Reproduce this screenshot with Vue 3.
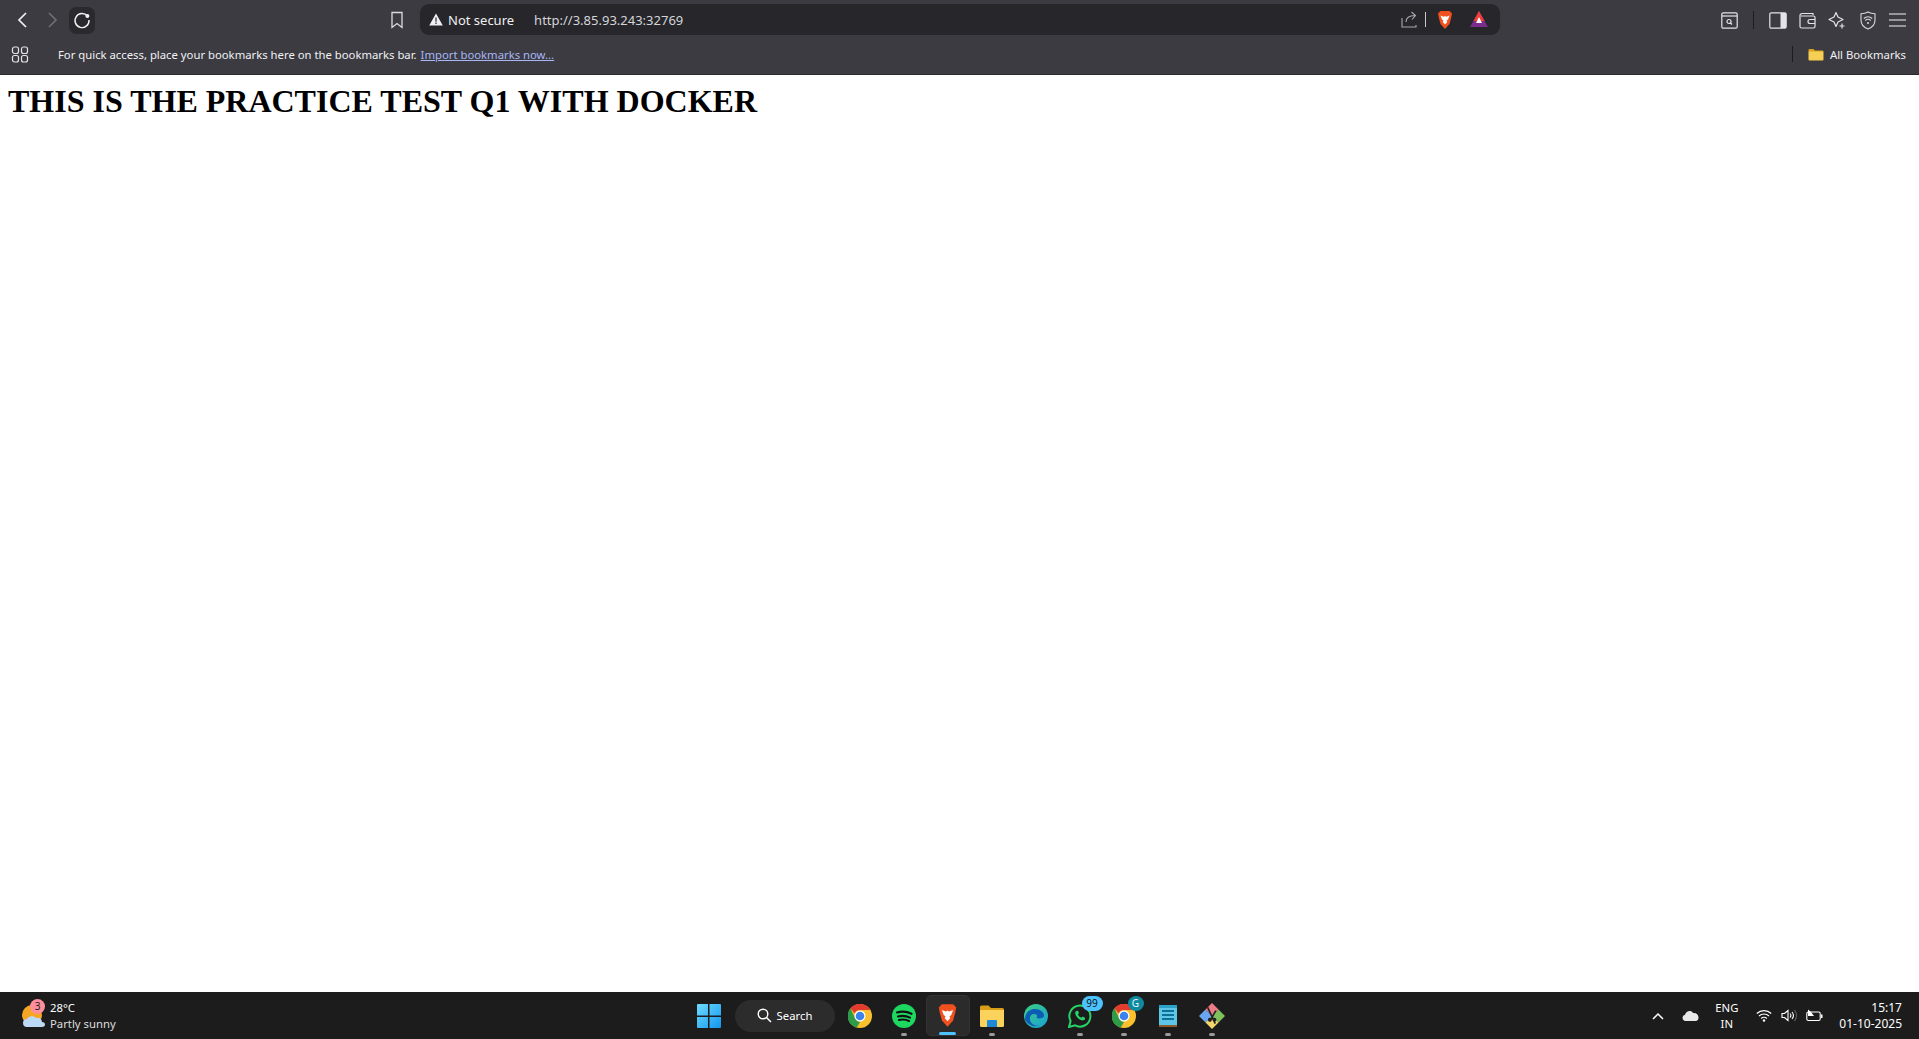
<script setup>
const apps = ['chrome', 'spotify', 'brave', 'folder', 'edge', 'whatsapp', 'chrome2', 'notepad', 'git']
const running = ['spotify', 'folder', 'whatsapp', 'chrome2', 'notepad', 'git']
</script>

<template>
  <div class="page">
    <header class="chrome-ui">
      <div class="toolbar">
        <div class="nav">
          <button class="nav-btn"><svg width="16" height="18" viewBox="0 0 16 18"><path d="M11 2 4 9l7 7" fill="none" stroke="#f0f0f2" stroke-width="1.700"/></svg></button>
          <button class="nav-btn"><svg width="16" height="18" viewBox="0 0 16 18"><path d="M5 2l7 7-7 7" fill="none" stroke="#6f6f75" stroke-width="1.700"/></svg></button>
          <button class="nav-btn reload"><svg width="20" height="20" viewBox="0 0 20 20"><path d="M15.500 6.200A7 7 0 1 0 17 10" fill="none" stroke="#f2f2f4" stroke-width="1.400"/><circle cx="15.400" cy="6" r="2" fill="#f2f2f4"/></svg></button>
        </div>
        <div class="bookmark-star"><svg width="14" height="18" viewBox="0 0 14 18"><path d="M2 1.500h10v15l-5-4-5 4z" fill="none" stroke="#dcdce0" stroke-width="1.300"/></svg></div>
        <div class="omnibox">
          <svg class="warn" width="14" height="13" viewBox="0 0 14 13"><path d="M7 .5 13.800 12.500H.2z" fill="#f0f0f2"/><path d="M6.400 4.500h1.200v4.200H6.400zM6.400 9.600h1.200v1.300H6.400z" fill="#2a2a2e"/></svg>
          <span class="secure">Not secure</span>
          <span class="url">http://3.85.93.243:32769</span>
          <span class="grow"></span>
          <svg class="share" width="16" height="17" viewBox="0 0 16 17"><path d="M1 7v9h14v-2M5 11c0-4 3-6.500 9-6.500M10.500 1 14.500 4.500 11 8.500" fill="none" stroke="#a9a9ae" stroke-width="1.100"/></svg>
          <span class="omni-sep"></span>
          <svg class="lion" width="16" height="20" viewBox="0 0 16 20"><path d="M3.500 1h9l2.500 2.500-.8 4L12.500 14 8 19l-4.500-5-1.700-6.500L1 3.500z" fill="#f0511e"/><path d="M3.500 5.500 6.800 6.700 8 6l1.200.7 3.300-1.200-1.500 4-1.500 1.200.8 1.300L8 14.500 5.700 12l.8-1.300L5 9.500z" fill="#fff"/></svg>
          <svg class="bat" width="18" height="17" viewBox="0 0 18 17"><path d="M9 0 18 16H0z" fill="#7a2d8c"/><path d="M9 0 14.500 10h-11z" fill="#ef3f3a"/><path d="M9 6 12 12H6z" fill="#fff"/></svg>
        </div>
        <div class="tools">
          <svg width="17" height="17" viewBox="0 0 17 17"><rect x=".8" y=".8" width="15.400" height="15.400" rx="1.500" fill="none" stroke="#e4e4e8" stroke-width="1.200"/><path d="M1 4h15" stroke="#e4e4e8" stroke-width="1.200"/><circle cx="8" cy="9.500" r="2" fill="none" stroke="#e4e4e8" stroke-width="1.200"/><path d="m9.500 11 1.500 1.500" stroke="#e4e4e8" stroke-width="1.200"/></svg>
          <span class="tool-sep"></span>
          <svg class="sidebar-ic" width="18" height="17" viewBox="0 0 18 17"><rect x=".8" y=".8" width="16.400" height="15.400" rx="1.500" fill="none" stroke="#e4e4e8" stroke-width="1.200"/><rect x="11.500" y="1" width="5.500" height="15" fill="#e4e4e8"/></svg>
          <svg class="wallet" width="17" height="17" viewBox="0 0 17 17"><path d="M14 3V1.500H3A2 2 0 0 0 1 3.500v11a1.500 1.500 0 0 0 1.500 1.500h12A1.500 1.500 0 0 0 16 14.500v-9a1.500 1.500 0 0 0-1.500-1.500H2" fill="none" stroke="#e4e4e8" stroke-width="1.200"/><path d="M16 7.500h-5a2 2 0 0 0 0 4h5" fill="none" stroke="#e4e4e8" stroke-width="1.200"/></svg>
          <svg class="spark" width="18" height="19" viewBox="0 0 18 19"><path d="M8 1.500 10 6l5 2.500-5 2.500-2 4.500L6 11 1 8.500 6 6z" fill="none" stroke="#e4e4e8" stroke-width="1.200" stroke-linejoin="round"/><path d="M14 12.500v5M11.500 15h5" stroke="#e4e4e8" stroke-width="1.200"/></svg>
          <svg class="shield" width="16" height="19" viewBox="0 0 16 19"><path d="M8 1c2 1.200 4.500 1.700 7 1.700V9c0 4.500-3 7.500-7 9-4-1.500-7-4.500-7-9V2.700C3.500 2.700 6 2.200 8 1z" fill="none" stroke="#d8d8dc" stroke-width="1.100"/><path d="M3.800 7.500a6 6 0 0 1 8.400 0M5.300 9.500a4 4 0 0 1 5.400 0" fill="none" stroke="#d8d8dc" stroke-width="1.100"/><circle cx="8" cy="12" r="1" fill="#d8d8dc"/></svg>
          <svg class="menu" width="17" height="14" viewBox="0 0 17 14"><path d="M0 1h17M0 7h17M0 13h17" stroke="#b5b5ba" stroke-width="1.500"/></svg>
        </div>
      </div>
      <div class="bookmarks">
        <svg class="apps" width="18" height="17" viewBox="0 0 18 17"><g fill="none" stroke="#e4e4e8" stroke-width="1.200"><rect x="1.500" y="1" width="6" height="6.500" rx="2"/><rect x="10.500" y="1" width="6" height="6.500" rx="2"/><rect x="1.500" y="9.500" width="6" height="6.500" rx="2"/><rect x="10.500" y="9.500" width="6" height="6.500" rx="2"/></g></svg>
        <span class="hint">For quick access, place your bookmarks here on the bookmarks bar.</span>
        <a class="import">Import bookmarks now...</a>
        <span class="grow"></span>
        <span class="bm-sep"></span>
        <svg class="folder-ic" width="16" height="13" viewBox="0 0 16 13"><path d="M.5 2A1 1 0 0 1 1.500 1h4l1.500 1.500h7.500a1 1 0 0 1 1 1V4H.5z" fill="#d9a21f"/><rect x=".5" y="3.500" width="15" height="9" rx="1" fill="#f8cf55"/></svg>
        <span class="all">All Bookmarks</span>
      </div>
    </header>

    <main class="content">
      <h1>THIS IS THE PRACTICE TEST Q1 WITH DOCKER</h1>
    </main>

    <footer class="taskbar">
      <div class="weather">
        <div class="weather-ic">
          <svg width="26" height="28" viewBox="0 0 26 28"><circle cx="12" cy="12" r="10" fill="#f5a623"/><path d="M7 24a4 4 0 0 1 0-8c1-3 7-4 9-1 3-1 6 1 6 4 2 0 3 1 3 2.500S24 24 22 24z" fill="#bcd9f5"/></svg>
          <span class="notif">3</span>
        </div>
        <div class="weather-text">
          <span class="temp">28°C</span>
          <span class="sky">Partly sunny</span>
        </div>
      </div>

      <div class="center">
        <div class="cell">
          <svg width="24" height="24" viewBox="0 0 24 24"><defs><linearGradient id="win" x1="0" y1="0" x2="1" y2="1"><stop offset="0" stop-color="#6fdcff"/><stop offset="1" stop-color="#1196f0"/></linearGradient></defs><path d="M0 1a1 1 0 0 1 1-1h10v11.500H0zM12.500 0H23a1 1 0 0 1 1 1v10.500H12.500zM0 13h11v11H1a1 1 0 0 1-1-1zM12.500 13H24v10a1 1 0 0 1-1 1H12.500z" fill="url(#win)"/></svg>
        </div>
        <div class="search">
          <svg width="15" height="15" viewBox="0 0 15 15"><circle cx="6" cy="6" r="4.800" fill="none" stroke="#fff" stroke-width="1.400"/><path d="m9.500 9.500 4.500 4.500" stroke="#fff" stroke-width="1.500"/></svg>
          <span>Search</span>
        </div>
        <div v-for="a in apps" :key="a" class="cell" :class="{ active: a === 'brave' }">
          <svg v-if="a === 'chrome' || a === 'chrome2'" width="24" height="24" viewBox="0 0 24 24"><circle cx="12" cy="12" r="12" fill="#fbc02d"/><path d="M12 0a12 12 0 0 1 10.400 6H12a6 6 0 0 0-5.400 3.400L2.400 4.200A12 12 0 0 1 12 0z" fill="#e33b2e"/><path d="M2.400 4.200 7.500 15a6 6 0 0 0 4.500 3l-3.200 5.600A12 12 0 0 1 2.400 4.200z" fill="#2e9b48"/><circle cx="12" cy="12" r="5.500" fill="#fff"/><circle cx="12" cy="12" r="4.300" fill="#3b82ee"/></svg>
          <svg v-else-if="a === 'spotify'" width="24" height="24" viewBox="0 0 24 24"><circle cx="12" cy="12" r="12" fill="#1ed760"/><path d="M5 8.500c5-1.500 10-1 14.500 1.300M6 12.500c4.500-1.200 8.500-.7 12 1.200M7 16c3.500-1 7-.6 10 1" fill="none" stroke="#111" stroke-width="2.100" stroke-linecap="round"/></svg>
          <svg v-else-if="a === 'brave'" width="21" height="25" viewBox="0 0 16 20"><path d="M3.500 1h9l2.500 2.500-.8 4L12.500 14 8 19l-4.500-5-1.700-6.500L1 3.500z" fill="#f0511e"/><path d="M3.500 5.500 6.800 6.700 8 6l1.200.7 3.300-1.200-1.500 4-1.500 1.200.8 1.300L8 14.500 5.700 12l.8-1.300L5 9.500z" fill="#fff"/></svg>
          <svg v-else-if="a === 'folder'" width="24" height="22" viewBox="0 0 24 22"><path d="M0 2a1.500 1.500 0 0 1 1.500-1.500h7L11 3h11.500A1.500 1.500 0 0 1 24 4.500V7H0z" fill="#d99e16"/><path d="M0 5h24v15.500a1.500 1.500 0 0 1-1.500 1.500h-21A1.500 1.500 0 0 1 0 20.500z" fill="#fbd35c"/><path d="M7 16a1 1 0 0 1 1-1h8a1 1 0 0 1 1 1v6H7z" fill="#1e88d8"/></svg>
          <svg v-else-if="a === 'edge'" width="24" height="24" viewBox="0 0 24 24"><defs><linearGradient id="edg" x1="0" y1="0" x2="1" y2="1"><stop offset="0" stop-color="#3bd17f"/><stop offset="1" stop-color="#1a9fd8"/></linearGradient></defs><circle cx="12" cy="12" r="12" fill="url(#edg)"/><path d="M1 16C1 8 6 5 11 5c5 0 9 3 9 6.500 0 2-2 3-5 3-1.800 0-2.500-.6-2.500-1.200 2-2-1-4.300-4-3-3 1.300-3.500 5.700-1 8.700 2 2.400 5 3 8 2.500A12 12 0 0 1 1 16z" fill="#0c5bb5"/></svg>
          <svg v-else-if="a === 'whatsapp'" width="24" height="24" viewBox="0 0 24 24"><path d="M1 23l1.600-6A10.500 10.500 0 1 1 7 21.400z" fill="none" stroke="#25d366" stroke-width="2"/><path d="M8 7c-1 1-1.200 2.500-.2 4.300 1.300 2.500 3.500 4.300 6 5 1.500.4 2.700-.2 3.400-1.300l-.3-1.300-2.300-1.200-1.200 1.300c-1.500-.6-2.800-1.900-3.500-3.400L11 9l-1-2.300z" fill="#25d366"/></svg>
          <svg v-else-if="a === 'notepad'" width="20" height="24" viewBox="0 0 20 24"><rect x="1" y="1" width="18" height="22" rx="1" fill="#5cc7e6"/><path d="M1 21h18v2H1z" fill="#8a5a2b"/><path d="M1 1h18v3H1z" fill="#2da2c8"/><path d="M4 7h12M4 11h12M4 15h12" stroke="#0f6f98" stroke-width="1.800"/></svg>
          <svg v-else-if="a === 'git'" width="26" height="26" viewBox="0 0 24 24"><path d="M12 0 18 6 12 12 6 6z" fill="#ef7b86"/><path d="M6 6 12 12 6 18 0 12z" fill="#6aa5ef"/><path d="M18 6 24 12 18 18 12 12z" fill="#7fc25c"/><path d="M12 12 18 18 12 24 6 18z" fill="#f3d66b"/><path d="M8 4l7 15M15.500 7 10 17" stroke="#222" stroke-width="1.500"/><circle cx="10" cy="15.500" r="1.800" fill="#222"/><circle cx="14.300" cy="15.500" r="1.800" fill="#222"/></svg>
          <span v-if="a === 'whatsapp'" class="badge blue">99</span>
          <span v-if="a === 'chrome2'" class="badge teal">G</span>
          <span v-if="running.includes(a)" class="dot"></span>
          <span v-if="a === 'brave'" class="bar"></span>
        </div>
      </div>

      <div class="tray">
        <svg class="chev" width="12" height="8" viewBox="0 0 12 8"><path d="M1 7l5-5 5 5" fill="none" stroke="#fff" stroke-width="1.500"/></svg>
        <svg class="cloud" width="17" height="11" viewBox="0 0 17 11"><path d="M3.500 11a3.200 3.200 0 0 1-.5-6.300C4 1 9-.5 11 3c3-.5 5.500 1.500 5.500 4.500 0 2-1 3.500-3 3.500z" fill="#e9e9e9"/></svg>
        <div class="lang"><span>ENG</span><span>IN</span></div>
        <svg class="wifi" width="16" height="13" viewBox="0 0 16 13"><path d="M.8 4.500a10.500 10.500 0 0 1 14.400 0M3 7a7.300 7.300 0 0 1 10 0M5.200 9.500a4 4 0 0 1 5.600 0" fill="none" stroke="#fff" stroke-width="1.200"/><circle cx="8" cy="11.500" r="1.200" fill="#fff"/></svg>
        <svg class="vol" width="17" height="13" viewBox="0 0 17 13"><path d="M1 4.500h2.500L7 1.500v10l-3.500-3H1z" fill="none" stroke="#fff" stroke-width="1.100"/><path d="M9 4.500a3 3 0 0 1 0 4M11 3a5.500 5.500 0 0 1 0 7" fill="none" stroke="#fff" stroke-width="1.100"/><path d="M13.500 1a9 9 0 0 1 0 11" fill="none" stroke="#666" stroke-width="1.100"/></svg>
        <svg class="batt" width="17" height="13" viewBox="0 0 17 13"><rect x=".8" y="3" width="13.400" height="8.500" rx="1.500" fill="none" stroke="#fff" stroke-width="1.100"/><path d="M15 5.500h1.500v3.500H15z" fill="#fff"/><path d="M2 3V.5l3 2.500 3 4H2z" fill="#fff"/></svg>
        <div class="clock"><span>15:17</span><span>01-10-2025</span></div>
      </div>
    </footer>
  </div>
</template>

<style scoped>
.page {
  height: 1039px;
  display: flex;
  flex-direction: column;
  overflow: hidden;
  background: #fff;
  font-family: "Noto Sans", "Open Sans", sans-serif;
}
.chrome-ui {
  height: 75px;
  flex: none;
  background: #3b3b41;
  border-bottom: 1px solid #2a2a2e;
  box-sizing: border-box;
  color: #f1f1f3;
}
.grow { flex: 1; }
.toolbar {
  height: 40px;
  display: flex;
  align-items: center;
}
.nav {
  display: flex;
  align-items: center;
  margin-left: 14px;
  gap: 12px;
}
.nav-btn {
  width: 17px;
  height: 26px;
  padding: 0;
  border: 0;
  background: none;
  display: flex;
  align-items: center;
  justify-content: center;
}
.reload {
  width: 26px;
  height: 27px;
  background: #2a2a2e;
  border-radius: 7px;
  margin-left: -3px;
}
.bookmark-star {
  margin-left: 295px;
  display: flex;
}
.omnibox {
  margin-left: 16px;
  width: 1080px;
  height: 31px;
  margin-top: -1px;
  background: #26262b;
  border-radius: 9px;
  display: flex;
  align-items: center;
  box-sizing: border-box;
  padding: 0 12px 0 9px;
}
.secure {
  margin-left: 5px;
  font-size: 13px;
  color: #f0f0f2;
}
.url {
  margin-left: 20px;
  font-size: 13px;
  color: #d5d5d9;
}
.omni-sep {
  width: 1px;
  height: 15px;
  background: #c8c8cc;
  margin: 0 11px 0 8px;
}
.bat { margin-left: 17px; }
.tools {
  margin-left: 221px;
  display: flex;
  align-items: center;
}
.tool-sep {
  width: 1px;
  height: 18px;
  background: #1d1d20;
  margin: 0 15px 0 15px;
}
.wallet { margin-left: 12px; }
.spark { margin-left: 12px; }
.shield { margin-left: 14px; }
.menu { margin-left: 13px; }
.bookmarks {
  height: 34px;
  display: flex;
  align-items: center;
  padding: 0 0 4px 11px;
  box-sizing: border-box;
  font-size: 11.300px;
  margin-top: -1px;
}
.hint { margin-left: 29px; white-space: nowrap; }
.import {
  margin-left: 4px;
  color: #a9b6f5;
  text-decoration: underline;
  white-space: nowrap;
}
.bm-sep {
  width: 1px;
  height: 16px;
  background: #1d1d20;
  margin-right: 15px;
}
.all {
  margin: 0 13px 0 6px;
  white-space: nowrap;
}
.content {
  flex: 1;
  min-height: 0;
}
h1 {
  margin: 8px;
  font-family: "Liberation Serif", "Times New Roman", serif;
  font-size: 32px;
  font-weight: 700;
  color: #000;
}
.taskbar {
  height: 47px;
  flex: none;
  background: #1c1c1c;
  color: #fff;
  display: grid;
  grid-template-columns: 1fr auto 1fr;
  align-items: center;
  font-size: 11.300px;
}
.weather {
  display: flex;
  align-items: center;
  padding-left: 20px;
}
.weather-ic {
  position: relative;
  width: 30px;
  height: 28px;
  margin-top: 2px;
}
.notif {
  position: absolute;
  left: 10px;
  top: -4px;
  width: 15px;
  height: 15px;
  border-radius: 50%;
  background: #ff8f9c;
  color: #1c1c1c;
  font-size: 10px;
  line-height: 15px;
  text-align: center;
}
.weather-text {
  display: flex;
  flex-direction: column;
  line-height: 16px;
}
.sky { color: #dcdcdc; }
.center {
  display: flex;
  align-items: center;
  margin-left: 1px;
}
.cell {
  position: relative;
  width: 44px;
  height: 41px;
  display: flex;
  align-items: center;
  justify-content: center;
  border-radius: 5px;
  box-sizing: border-box;
}
.cell.active {
  background: #2b2b2b;
  border: 1px solid #333;
}
.search {
  width: 100px;
  height: 32px;
  margin: 0 3px 0 4px;
  border-radius: 16px;
  background: #2c2c2c;
  display: flex;
  align-items: center;
  justify-content: center;
  gap: 5px;
  font-size: 11.300px;
}
.dot {
  position: absolute;
  bottom: 0;
  left: 19px;
  width: 6px;
  height: 3px;
  border-radius: 2px;
  background: #9a9a9a;
}
.bar {
  position: absolute;
  bottom: 0;
  left: 12px;
  width: 17px;
  height: 3px;
  border-radius: 2px;
  background: #4cc2ff;
}
.badge {
  position: absolute;
  top: 1px;
  left: 24px;
  min-width: 17px;
  height: 15px;
  padding: 0 2px;
  border-radius: 8px;
  font-size: 10px;
  line-height: 15px;
  text-align: center;
  color: #111;
}
.blue { background: #4cc2ff; }
.teal { background: #0e8aa0; color: #e8f8fb; left: 26px; min-width: 12px; border-radius: 50%; }
.tray {
  display: flex;
  align-items: center;
  justify-content: flex-end;
  padding-right: 17px;
}
.cloud { margin-left: 18px; }
.lang {
  margin-left: 16px;
  display: flex;
  flex-direction: column;
  align-items: center;
  line-height: 16px;
}
.wifi { margin-left: 18px; }
.vol { margin-left: 9px; }
.batt { margin-left: 8px; }
.clock {
  margin-left: 16px;
  display: flex;
  flex-direction: column;
  align-items: flex-end;
  line-height: 16px;
  font-size: 12px;
}
</style>

<style>
body { margin: 0; }
</style>
